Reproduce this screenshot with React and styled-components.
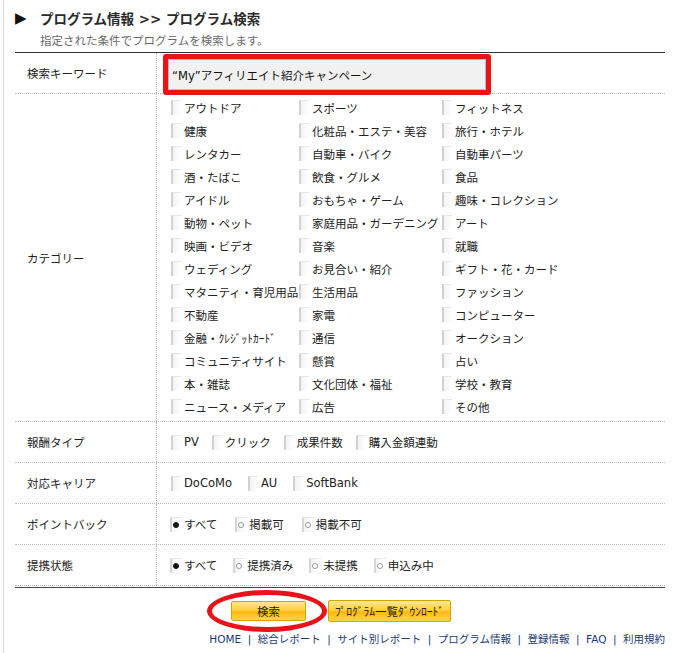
import React from 'react';
import styled, { createGlobalStyle } from 'styled-components';

const Global = createGlobalStyle`
  html, body { margin: 0; padding: 0; background: #fff; }
  body {
    font-family: "DejaVu Sans", "Noto Sans CJK JP", sans-serif;
    font-size: 11.5px;
    color: #222;
  }
`;

const Page = styled.div`
  margin-left: 3px;
  border-left: 1px solid #d8d8d8;
  padding: 8px 0 0 11px;
  width: 661px;
  min-height: 653px;
  box-sizing: border-box;
`;

const Inner = styled.div`
  width: 650px;
`;

const TitleRow = styled.h1`
  margin: 0;
  height: 20px;
  display: flex;
  align-items: center;
  font-size: 13.5px;
  font-weight: bold;
  color: #2a2a2a;
`;

const Arrow = styled.span`
  width: 25px;
  font-size: 15px;
  line-height: 1;
  color: #111;
`;

const Subtitle = styled.p`
  margin: 5px 0 3px 25px;
  line-height: 16px;
  color: #6a6a6a;
  font-size: 11.5px;
`;

const Table = styled.div`
  border-top: 1px solid #333;
  border-bottom: 1px solid #444;
  padding-bottom: 1px;
`;

const Row = styled.div`
  display: grid;
  grid-template-columns: 142px 1fr;
  min-height: 40px;
  border-bottom: 1px dotted #b8b8b8;
`;

const Label = styled.div`
  display: flex;
  align-items: center;
  padding-left: 12px;
  border-right: 1px dotted #b8b8b8;
`;

const Value = styled.div`
  display: flex;
  align-items: center;
  gap: ${p => p.$gap || 14}px;
  padding-left: ${p => p.$pl ?? 14}px;
`;

const KeywordCell = styled.div`
  padding: 6px 0 3px 11px;
`;

const InputWrap = styled.div`
  position: relative;
  width: 318px;
  height: 31px;
  &::after {
    content: "";
    position: absolute;
    inset: -5px;
    border: 5px solid #ec1313;
    border-radius: 3px;
    pointer-events: none;
  }
`;

const Input = styled.input`
  width: 100%;
  height: 100%;
  box-sizing: border-box;
  border: 1px solid #aac0d8;
  background: #f1f1f1;
  padding: 0 0 0 3px;
  font-family: inherit;
  font-size: 11.5px;
  color: #111;
  outline: none;
`;

const CategoryGrid = styled.div`
  display: grid;
  grid-template-columns: 128px 143px 1fr;
  grid-auto-rows: 23px;
  align-items: center;
  padding: 2px 0 3px 14px;
`;

const Item = styled.label`
  display: flex;
  align-items: center;
  white-space: nowrap;
`;

const CheckBox = styled.span`
  width: 10px;
  height: 15px;
  margin-right: 3px;
  box-sizing: border-box;
  border-left: 2px solid #d2d2d2;
  border-top: 1px solid #e6e6e6;
  background: linear-gradient(90deg, #f3f3f3, #fff);
  flex: none;
`;

const RadioBox = styled.span`
  width: 12px;
  height: 15px;
  box-sizing: border-box;
  border-left: 2px solid #d6d6d6;
  border-top: 1px solid #e8e8e8;
  background: linear-gradient(90deg, #f3f3f3, #fff);
  display: flex;
  align-items: center;
  padding-left: 1px;
  margin-right: 2px;
  flex: none;
`;

const Dot = styled.span`
  width: 6px;
  height: 6px;
  border-radius: 50%;
  box-sizing: border-box;
  background: ${p => (p.$on ? '#111' : '#fff')};
  border: 1px solid ${p => (p.$on ? '#111' : '#9a9a9a')};
`;

const Buttons = styled.div`
  display: flex;
  justify-content: center;
  align-items: center;
  gap: 22px;
  padding: 12px 0 0 2px;
`;

const BtnWrap = styled.div`
  position: relative;
  &::after {
    content: "";
    position: absolute;
    left: -24px;
    right: -21px;
    top: -11px;
    bottom: -11px;
    border: 5px solid #e8121a;
    border-radius: 50%;
    pointer-events: none;
  }
`;

const Button = styled.button`
  width: ${p => p.$w}px;
  height: ${p => p.$h}px;
  padding: 0;
  border: 1px solid #d9a200;
  border-radius: 2px;
  background: linear-gradient(#ffe890 0%, #ffd040 45%, #ffb90f 55%, #ffd54a 100%);
  font-family: inherit;
  font-size: 11.5px;
  color: #222;
  cursor: pointer;
`;

const Footer = styled.nav`
  display: flex;
  justify-content: flex-end;
  align-items: center;
  margin-top: 9px;
  line-height: 16px;
  font-size: 10.5px;
  color: #1b3a78;
`;

const FooterLink = styled.a`
  color: #1b3a78;
  text-decoration: none;
`;

const Sep = styled.span`
  margin: 0 6.5px;
  color: #1b3a78;
`;

const categories = [
  'アウトドア', 'スポーツ', 'フィットネス',
  '健康', '化粧品・エステ・美容', '旅行・ホテル',
  'レンタカー', '自動車・バイク', '自動車パーツ',
  '酒・たばこ', '飲食・グルメ', '食品',
  'アイドル', 'おもちゃ・ゲーム', '趣味・コレクション',
  '動物・ペット', '家庭用品・ガーデニング', 'アート',
  '映画・ビデオ', '音楽', '就職',
  'ウェディング', 'お見合い・紹介', 'ギフト・花・カード',
  'マタニティ・育児用品', '生活用品', 'ファッション',
  '不動産', '家電', 'コンピューター',
  '金融・ｸﾚｼﾞｯﾄｶｰﾄﾞ', '通信', 'オークション',
  'コミュニティサイト', '懸賞', '占い',
  '本・雑誌', '文化団体・福祉', '学校・教育',
  'ニュース・メディア', '広告', 'その他',
];

const rewardTypes = ['PV', 'クリック', '成果件数', '購入金額連動'];
const carriers = ['DoCoMo', 'AU', 'SoftBank'];
const pointBack = ['すべて', '掲載可', '掲載不可'];
const status = ['すべて', '提携済み', '未提携', '申込み中'];
const links = ['HOME', '総合レポート', 'サイト別レポート', 'プログラム情報', '登録情報', 'FAQ', '利用規約'];

const Check = ({ children }) => (
  <Item>
    <CheckBox />
    <span>{children}</span>
  </Item>
);

const Radio = ({ on, children }) => (
  <Item>
    <RadioBox><Dot $on={on} /></RadioBox>
    <span>{children}</span>
  </Item>
);

export default function App() {
  return (
    <>
      <Global />
      <Page>
        <Inner>
          <TitleRow>
            <Arrow>▶</Arrow>
            <span>プログラム情報 &gt;&gt; プログラム検索</span>
          </TitleRow>
          <Subtitle>指定された条件でプログラムを検索します。</Subtitle>

          <Table>
            <Row>
              <Label>検索キーワード</Label>
              <KeywordCell>
                <InputWrap>
                  <Input defaultValue="“My”アフィリエイト紹介キャンペーン" />
                </InputWrap>
              </KeywordCell>
            </Row>

            <Row>
              <Label>カテゴリー</Label>
              <CategoryGrid>
                {categories.map(c => <Check key={c}>{c}</Check>)}
              </CategoryGrid>
            </Row>

            <Row>
              <Label>報酬タイプ</Label>
              <Value $gap={13}>
                {rewardTypes.map(t => <Check key={t}>{t}</Check>)}
              </Value>
            </Row>

            <Row>
              <Label>対応キャリア</Label>
              <Value $gap={16}>
                {carriers.map(t => <Check key={t}>{t}</Check>)}
              </Value>
            </Row>

            <Row>
              <Label>ポイントバック</Label>
              <Value $gap={18} $pl={13}>
                {pointBack.map((t, i) => <Radio key={t} on={i === 0}>{t}</Radio>)}
              </Value>
            </Row>

            <Row>
              <Label>提携状態</Label>
              <Value $gap={16} $pl={13}>
                {status.map((t, i) => <Radio key={t} on={i === 0}>{t}</Radio>)}
              </Value>
            </Row>
          </Table>

          <Buttons>
            <BtnWrap>
              <Button $w={75} $h={20}>検索</Button>
            </BtnWrap>
            <Button $w={123} $h={22}>ﾌﾟﾛｸﾞﾗﾑ一覧ﾀﾞｳﾝﾛｰﾄﾞ</Button>
          </Buttons>

          <Footer>
            {links.map((l, i) => (
              <React.Fragment key={l}>
                {i > 0 && <Sep>|</Sep>}
                <FooterLink href="#">{l}</FooterLink>
              </React.Fragment>
            ))}
          </Footer>
        </Inner>
      </Page>
    </>
  );
}
